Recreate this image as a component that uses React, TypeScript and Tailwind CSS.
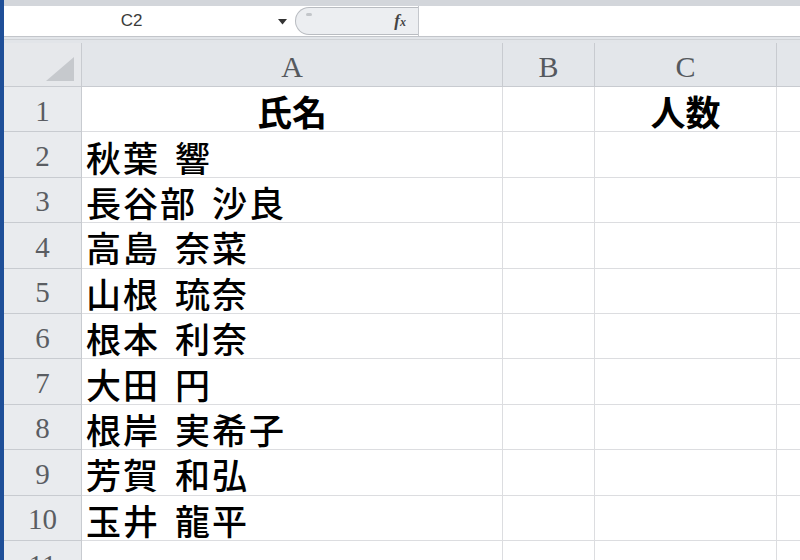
import React from "react"

const names = [
  "秋葉 響",
  "長谷部 沙良",
  "高島 奈菜",
  "山根 琉奈",
  "根本 利奈",
  "大田 円",
  "根岸 実希子",
  "芳賀 和弘",
  "玉井 龍平",
]

const jp = "font-['Noto_Sans_CJK_JP','Noto_Sans',sans-serif]"
const serif = "font-['Liberation_Serif','DejaVu_Serif',serif]"

function RowHead({ n }: { n: number }) {
  return (
    <div
      className={`flex w-[78px] shrink-0 items-center justify-center border-r border-b border-[#c8cbd0] bg-[#e9ebee] pt-1 text-[29px] leading-none text-[#5a5d62] ${serif}`}
    >
      {n}
    </div>
  )
}

function Row({ n, a, c, bold }: { n: number; a?: string; c?: string; bold?: boolean }) {
  const parts = a ? a.split(" ") : []
  return (
    <div className="flex h-[45.4px] shrink-0">
      <RowHead n={n} />
      <div
        className={`flex w-[421px] shrink-0 items-center gap-[15px] border-r border-b border-[#dcdde0] px-[4px] pt-[3px] text-[35px] leading-none text-black ${jp} ${
          bold ? "justify-center font-bold" : "font-medium tracking-[2px]"
        }`}
      >
        {parts.map((p) => (
          <span key={p}>{p}</span>
        ))}
      </div>
      <div className="w-[92px] shrink-0 border-r border-b border-[#dcdde0]" />
      <div
        className={`flex w-[182px] shrink-0 items-center justify-center border-r border-b border-[#dcdde0] pt-[3px] text-[35px] leading-none font-bold text-black ${jp}`}
      >
        {c}
      </div>
      <div className="flex-1 border-b border-[#dcdde0]" />
    </div>
  )
}

export default function App() {
  return (
    <div className="flex h-[560px] w-[800px] overflow-hidden bg-white">
      <div className="w-[4px] shrink-0 bg-[#1f4f98]" />
      <div className="flex min-w-0 flex-1 flex-col">
        {/* top chrome */}
        <div className="h-[6px] shrink-0 bg-[#d3d6db]" />
        <div className="flex h-[30px] shrink-0 items-center bg-white">
          <div className="relative flex h-full w-[291px] shrink-0 items-center">
            <span className="w-full pr-[36px] text-center text-[17px] text-[#3a3a3a] font-['Liberation_Sans',Arial,sans-serif]">
              C2
            </span>
            <svg className="absolute right-[8px] top-[13px]" width="9" height="6" viewBox="0 0 9 6">
              <path d="M0 0h9L4.5 5.5z" fill="#333" />
            </svg>
          </div>
          <div className="relative flex h-[28px] w-[123px] shrink-0 items-center justify-end rounded-l-full border border-r-0 border-[#b9bcc1] bg-[#eceef1] pr-[12px]">
            <span className="absolute left-[10px] top-[5px] h-[3px] w-[6px] rounded-full bg-[#c3c6ca]" />
            <span className="text-[17px] font-bold italic text-[#444] font-['Liberation_Serif',serif]">
              f<span className="text-[12px]">x</span>
            </span>
          </div>
          <div className="h-full w-px bg-[#c4c7cc]" />
          <div className="h-full flex-1 bg-white" />
        </div>
        <div className="h-[7px] shrink-0 border-t border-[#c2c5ca] bg-[#e2e5e9]">
          <div className="mt-[2px] h-px bg-[#cfd2d6]" />
        </div>

        {/* column headers */}
        <div className={`flex h-[44px] shrink-0 bg-[#e3e6ea] text-[30px] text-[#55595e] ${serif}`}>
          <div className="relative w-[78px] shrink-0 border-r border-b border-[#c8cbd0] bg-[#e6e8eb]">
            <svg className="absolute bottom-[5px] right-[7px]" width="28" height="24" viewBox="0 0 28 24">
              <path d="M28 0V24H0z" fill="#c6c9cd" />
            </svg>
          </div>
          <div className="flex w-[421px] shrink-0 items-center justify-center border-r border-b border-[#c8cbd0] pt-1">
            A
          </div>
          <div className="flex w-[92px] shrink-0 items-center justify-center border-r border-b border-[#c8cbd0] pt-1">
            B
          </div>
          <div className="flex w-[182px] shrink-0 items-center justify-center border-r border-b border-[#c8cbd0] pt-1">
            C
          </div>
          <div className="flex-1 border-b border-[#c8cbd0]" />
        </div>

        {/* rows */}
        <Row n={1} a="氏名" c="人数" bold />
        {names.map((nm, i) => (
          <Row key={nm} n={i + 2} a={nm} />
        ))}
        <Row n={11} />
      </div>
    </div>
  )
}
